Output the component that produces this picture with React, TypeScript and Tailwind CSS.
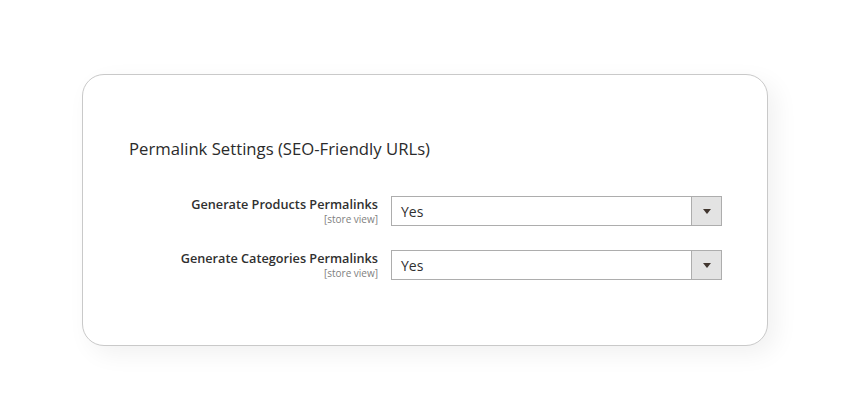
const rows = [
  { label: "Generate Products Permalinks", scope: "[store view]", value: "Yes" },
  { label: "Generate Categories Permalinks", scope: "[store view]", value: "Yes" },
];

function SelectBox({ value }: { value: string }) {
  return (
    <div className="flex h-[30px] w-[331px] border border-[#adadad] bg-white">
      <div className="flex flex-1 items-center pl-[9px] text-[14px] text-[#303030]">{value}</div>
      <div className="flex w-[30px] items-center justify-center border-l border-[#adadad] bg-[#e3e3e3]">
        <svg width="8" height="5" viewBox="0 0 8 5">
          <path d="M0 0h8L4 5z" fill="#41362f" />
        </svg>
      </div>
    </div>
  );
}

export default function App() {
  return (
    <div
      className="flex h-[420px] w-[850px] items-center justify-center bg-white"
      style={{ fontFamily: '"Open Sans", "Liberation Sans", sans-serif' }}
    >
      <div className="h-[272px] w-[686px] rounded-[22px] border border-[#c9c9c9] bg-white pl-[46px] pt-[62px] shadow-[8px_8px_24px_rgba(0,0,0,0.06)]">
        <h2 className="text-[16.7px] font-medium leading-[24px] text-[#2b2b2b]">Permalink Settings (SEO-Friendly URLs)</h2>
        <div className="mt-[35px] flex flex-col gap-[24px]">
          {rows.map((row) => (
            <div key={row.label} className="flex">
              <div className="flex w-[249px] flex-col items-end pt-[1px]">
                <span className="text-[12.7px] font-semibold leading-[15px] text-[#303030]">{row.label}</span>
                <span className="mt-[1px] text-[10px] leading-[12px] text-[#808080]">{row.scope}</span>
              </div>
              <div className="ml-[13px]">
                <SelectBox value={row.value} />
              </div>
            </div>
          ))}
        </div>
      </div>
    </div>
  );
}
